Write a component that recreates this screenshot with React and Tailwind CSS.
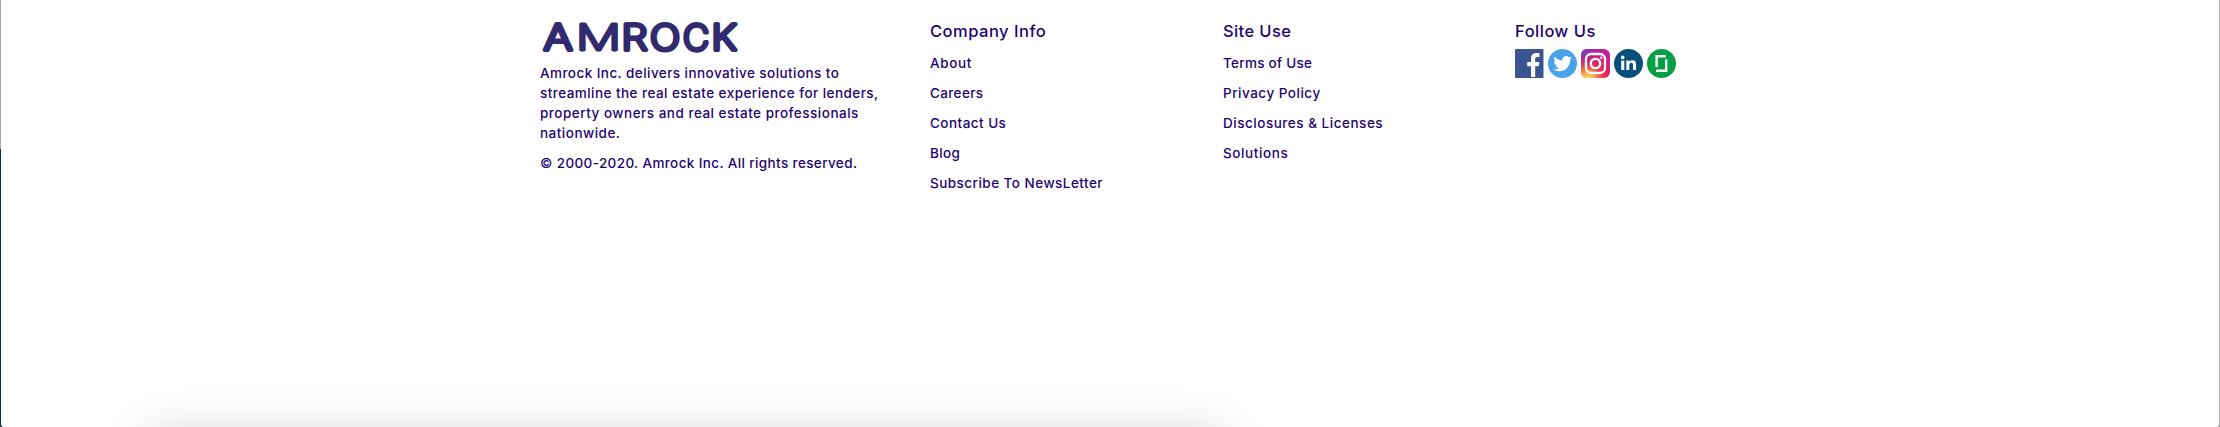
import React from "react";

const companyLinks = [
  ["About", "tracking-[0.66px]"],
  ["Careers", "tracking-[0.36px]"],
  ["Contact Us", "tracking-[0.46px]"],
  ["Blog", "tracking-[0.4px]"],
  ["Subscribe To NewsLetter", "tracking-[0.47px]"],
];

const siteLinks = [
  ["Terms of Use", "tracking-[0.27px]"],
  ["Privacy Policy", "tracking-[0.51px]"],
  ["Disclosures & Licenses", "tracking-[0.52px]"],
  ["Solutions", "tracking-[0.6px]"],
];

// Each letter of the wordmark with its left edge, advance width and stroke.
const wordmarkLetters = [
  ["A", 3.8, 28.5, 4],
  ["M", 36, 45, 2.9],
  ["R", 81.5, 26, 4],
  ["O", 110, 30, 4],
  ["C", 143, 26, 4.2],
  ["K", 171.5, 25, 4.2],
];

function Wordmark() {
  return (
    <svg className="block h-[40px] w-[210px] overflow-visible" viewBox="0 0 210 40" role="img" aria-label="Amrock">
      <g
        fontFamily="Inter, sans-serif"
        fontSize="35"
        fontWeight="200"
        fill="#312a6f"
        stroke="#312a6f"
        strokeLinejoin="round"
      >
        {wordmarkLetters.map(([letter, x, width, stroke]) => (
          <text key={letter} x={x} y="33.6" textLength={width} lengthAdjust="spacingAndGlyphs" strokeWidth={stroke}>{letter}</text>
        ))}
      </g>
    </svg>
  );
}

function LinkColumn({ title, links, className, titleClass }) {
  return (
    <nav className={className}>
      <h2 className={`h-[32px] pt-[3px] text-[16.5px] leading-[24px] whitespace-nowrap ${titleClass}`}>{title}</h2>
      <ul className="pt-[5px]">
        {links.map(([label, spacing]) => (
          <li key={label} className="h-[30px]">
            <a href="#" className={`block text-[13.5px] leading-[20px] whitespace-nowrap ${spacing}`}>{label}</a>
          </li>
        ))}
      </ul>
    </nav>
  );
}

const iconClass = "block h-[29px] w-[29px] shrink-0";

function Facebook() {
  return (
    <svg className={iconClass} viewBox="0 0 29 29">
      <rect width="28.5" height="29" rx="1" fill="#3b5590" />
      <path d="M16 28V17.3h-3.8v-4.4H16V9.7c0-3.8 2.2-5.8 5.7-5.8 1.3 0 2.2.1 2.7.2v4h-2.1c-1.7 0-2.1.8-2.1 2v2.8h4.1l-.6 4.4h-3.5V28z" fill="#fff" />
    </svg>
  );
}

function Twitter() {
  return (
    <svg className={iconClass} viewBox="0 0 29 29">
      <circle cx="14.5" cy="14.5" r="14.5" fill="#4aa3e8" />
      <g transform="translate(5.4 5.4) scale(.77)">
        <path fill="#fff" d="M23.95 4.57a10 10 0 0 1-2.82.77 4.96 4.96 0 0 0 2.16-2.72c-.95.55-2 .95-3.13 1.18a4.92 4.92 0 0 0-8.38 4.48C7.69 8.1 4.07 6.13 1.64 3.16a4.82 4.82 0 0 0-.67 2.48c0 1.71.87 3.21 2.19 4.1a4.9 4.9 0 0 1-2.23-.62v.06a4.92 4.92 0 0 0 3.95 4.83 5 5 0 0 1-2.21.08 4.94 4.94 0 0 0 4.6 3.42A9.87 9.87 0 0 1 0 19.54a13.99 13.99 0 0 0 7.56 2.21c9.05 0 14-7.5 14-13.98 0-.21 0-.42-.02-.63a9.94 9.94 0 0 0 2.46-2.55z" />
      </g>
    </svg>
  );
}

function Instagram() {
  return (
    <svg className={iconClass} viewBox="0 0 29 29">
      <defs>
        <linearGradient id="ig-base" x1="0.2" y1="1" x2="0.8" y2="0">
          <stop offset="0" stopColor="#f5793b" />
          <stop offset=".35" stopColor="#e52b55" />
          <stop offset=".65" stopColor="#dc1c70" />
          <stop offset="1" stopColor="#b525a5" />
        </linearGradient>
        <radialGradient id="ig-warm" cx=".25" cy="1.02" r=".6">
          <stop offset="0" stopColor="#ffdc6b" />
          <stop offset=".3" stopColor="#fdb54d" />
          <stop offset="1" stopColor="#f0453f" stopOpacity="0" />
        </radialGradient>
        <radialGradient id="ig-cool" cx="0" cy="0" r=".7">
          <stop offset="0" stopColor="#4a48d0" />
          <stop offset="1" stopColor="#9a28b5" stopOpacity="0" />
        </radialGradient>
      </defs>
      <rect width="29" height="29" rx="6" fill="url(#ig-base)" />
      <rect width="29" height="29" rx="6" fill="url(#ig-warm)" />
      <rect width="29" height="29" rx="6" fill="url(#ig-cool)" />
      <g fill="none" stroke="#fff" strokeWidth="2.3">
        <rect x="5" y="5" width="19" height="19" rx="5" />
        <circle cx="14.5" cy="14.5" r="4.7" />
      </g>
      <circle cx="20.2" cy="8.8" r="1.2" fill="#fff" />
    </svg>
  );
}

function LinkedIn() {
  return (
    <svg className={iconClass} viewBox="0 0 29 29">
      <circle cx="14.5" cy="14.5" r="14.5" fill="#07507c" />
      <g fill="#fff">
        <circle cx="8.7" cy="8.4" r="1.8" />
        <path d="M7.2 11.5h3.1v9.5H7.2zM12.3 11.5h2.9v1.3c.6-1 1.7-1.6 3.1-1.6 3 0 3.8 1.9 3.8 4.6V21H19v-4.7c0-1.3-.2-2.5-1.7-2.5-1.6 0-2 1.2-2 2.5V21h-3z" />
      </g>
    </svg>
  );
}

function Glassdoor() {
  return (
    <svg className={iconClass} viewBox="0 0 29 29">
      <circle cx="14.5" cy="14.5" r="14.5" fill="#069f43" />
      <path d="M9.6 18V7.2h9.2M9 21.8h10.2V10.5" fill="none" stroke="#fff" strokeWidth="2.4" />
    </svg>
  );
}

export default function App() {
  return (
    <div className="relative flex h-[427px] w-[2220px] overflow-hidden bg-white font-['Inter',sans-serif] font-medium text-[#1e0470]">
      <div className="flex w-px flex-col">
        <div className="h-[149px] bg-[#a6a6a6]" />
        <div className="flex-1 bg-[#03304a]" />
      </div>
      <footer className="flex flex-1 items-start pt-[16px] pl-[539px]">
        <section className="w-[390px]">
          <Wordmark />
          <p className="pt-[7px] text-[13.5px] leading-[20px] whitespace-nowrap">
            <span className="block tracking-[0.44px]">Amrock Inc. delivers innovative solutions to</span>
            <span className="block tracking-[0.45px]">streamline the real estate experience for lenders,</span>
            <span className="block tracking-[0.5px]">property owners and real estate professionals</span>
            <span className="block tracking-[0.49px]">nationwide.</span>
          </p>
          <p className="pt-[10px] text-[13.5px] leading-[20px] tracking-[0.38px] whitespace-nowrap">
            © 2000-2020. Amrock Inc. All rights reserved.
          </p>
        </section>
        <LinkColumn title="Company Info" links={companyLinks} className="w-[293px]" titleClass="tracking-[0.5px]" />
        <LinkColumn title="Site Use" links={siteLinks} className="w-[292px]" titleClass="tracking-[0.4px]" />
        <section>
          <h2 className="h-[33px] pt-[3px] text-[16.5px] leading-[24px] tracking-[0.5px] whitespace-nowrap">Follow Us</h2>
          <div className="flex gap-[4px]">
            <Facebook />
            <Twitter />
            <Instagram />
            <LinkedIn />
            <Glassdoor />
          </div>
        </section>
      </footer>
      <div className="w-px bg-[#b0b0b0]" />
      <div className="absolute top-[437px] left-[150px] h-[100px] w-[1070px] shadow-[0_0_50px_rgba(0,0,0,0.22)]" />
      <div className="absolute bottom-0 left-0 h-[2px] w-[2px] bg-[#32515f]" />
      <div className="absolute right-0 bottom-0 h-[2px] w-[2px] bg-[#b0b0b0]" />
    </div>
  );
}
